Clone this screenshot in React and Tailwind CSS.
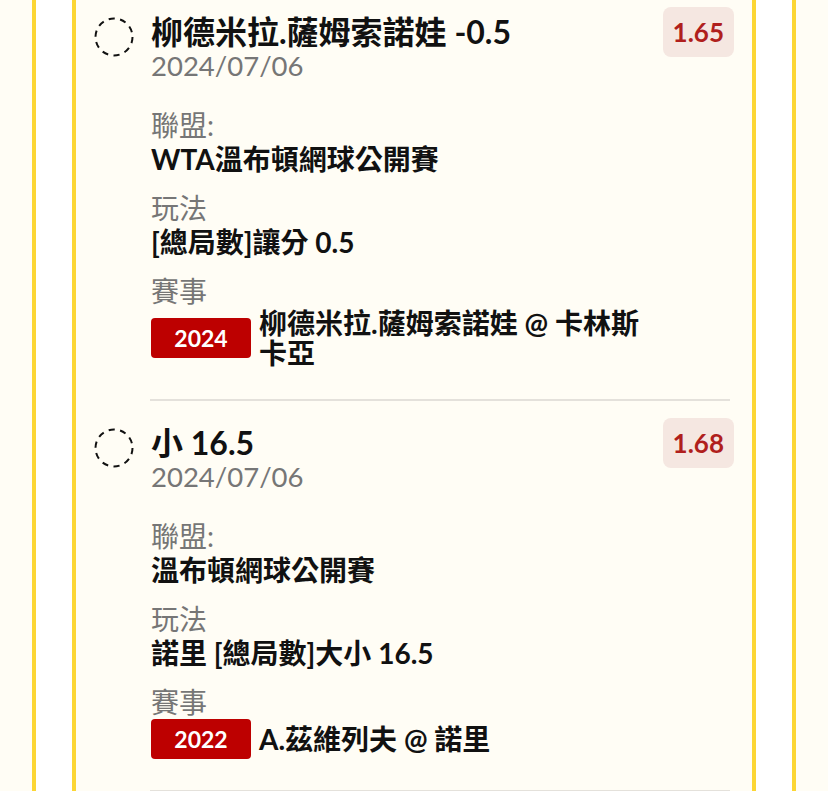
const bets = [
  {
    title: "柳德米拉.薩姆索諾娃 -0.5",
    date: "2024/07/06",
    odds: "1.65",
    league: "WTA溫布頓網球公開賽",
    market: "[總局數]讓分 0.5",
    year: "2024",
    match: "柳德米拉.薩姆索諾娃 @ 卡林斯卡亞",
  },
  {
    title: "小 16.5",
    date: "2024/07/06",
    odds: "1.68",
    league: "溫布頓網球公開賽",
    market: "諾里 [總局數]大小 16.5",
    year: "2022",
    match: "A.茲維列夫 @ 諾里",
  },
];

function DashedCircle() {
  return (
    <svg width="40" height="40" viewBox="0 0 40 40" className="mt-[10px] shrink-0">
      <circle
        cx="20"
        cy="20"
        r="18.5"
        fill="none"
        stroke="#111"
        strokeWidth="2"
        strokeDasharray="6.2 5.4"
      />
    </svg>
  );
}

function Field({ label, value, first }) {
  return (
    <div className={first ? "mt-[26px]" : "mt-[15px]"}>
      <div className="text-[28px] leading-[34px] text-[#767676]">{label}</div>
      <div className="text-[28px] leading-[34px] font-bold text-[#111]">{value}</div>
    </div>
  );
}

function BetItem({ bet, first }) {
  return (
    <div className={first ? "pt-[7px]" : "pt-[17px]"}>
      <div className="flex items-start px-[18px]">
        <DashedCircle />
        <div className="ml-[17px] min-w-0 flex-1">
          <div className="flex items-start justify-between">
            <div className="pt-[7px]">
              <div className="text-[32px] leading-[36px] font-bold text-[#111]">{bet.title}</div>
              <div className="text-[27.5px] leading-[32px] text-[#767676]">{bet.date}</div>
            </div>
            <div className="flex h-[50px] items-center rounded-lg bg-[#f5e7e1] px-[10px] text-[26px] font-bold text-[#b01f1d]">
              {bet.odds}
            </div>
          </div>

          <Field label="聯盟:" value={bet.league} first />
          <Field label="玩法" value={bet.market} />

          <div className="mt-[15px] text-[28px] leading-[34px] text-[#767676]">賽事</div>
          <div className="flex items-center gap-2">
            <div className="flex h-10 w-[100px] shrink-0 items-center justify-center rounded bg-[#bd0000] text-[23px] font-bold text-white">
              {bet.year}
            </div>
            <div className="max-w-[395px] text-[28px] leading-[30px] font-bold text-[#111]">
              {bet.match}
            </div>
          </div>
        </div>
      </div>
      <div className="ml-[74px] mr-[22px] mt-[31px] h-[2px] bg-[#e4e1db]" />
    </div>
  );
}

export default function App() {
  return (
    <div className="min-h-screen bg-[#fffdf5] px-8 font-['Lato','Noto_Sans_CJK_TC',sans-serif]">
      <div className="min-h-screen border-x-4 border-[#fcd634] bg-white px-9">
        <div className="min-h-screen border-x-4 border-[#fcd634] bg-[#fffdf5]">
          {bets.map((bet, i) => (
            <BetItem key={i} bet={bet} first={i === 0} />
          ))}
        </div>
      </div>
    </div>
  );
}
